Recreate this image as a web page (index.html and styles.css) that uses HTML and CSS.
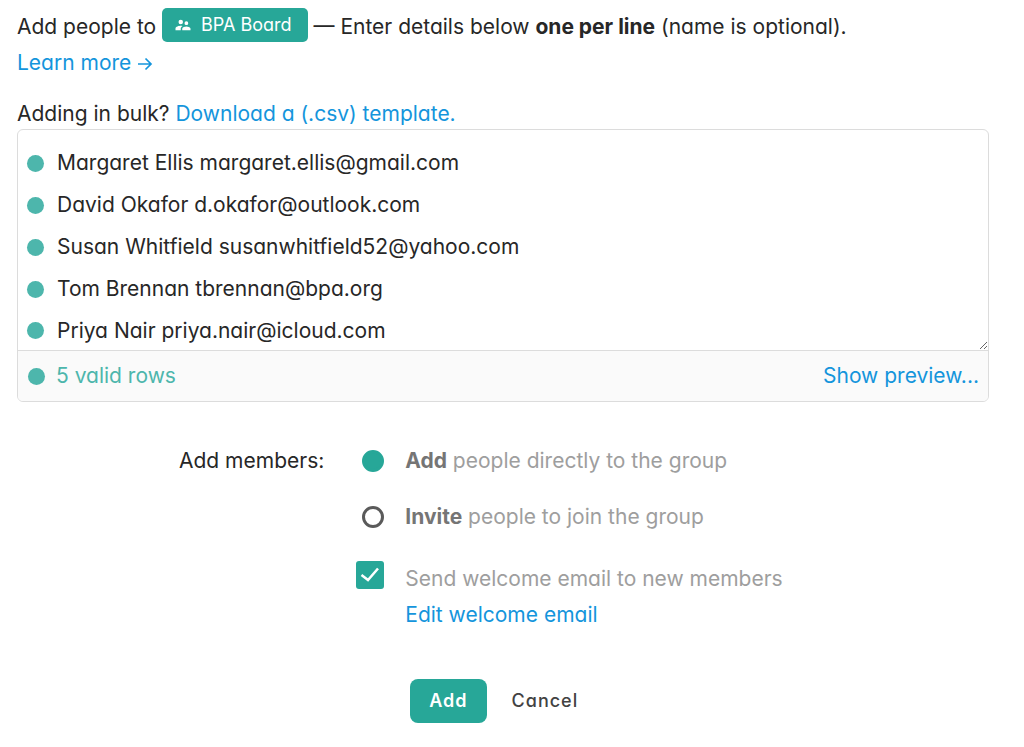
FILE: index.html
```html
<!DOCTYPE html>
<html lang="en">
<head>
<meta charset="utf-8">
<meta name="viewport" content="width=device-width, initial-scale=1">
<title>Add people</title>
<link rel="stylesheet" href="styles.css">
</head>
<body>
<form class="page">
  <p class="intro">
    Add people to
    <a class="group" href="#group"><svg class="group-icon" viewBox="0 0 24 24" aria-hidden="true"><path d="M16.500 12a2.500 2.500 0 1 0 0-5 2.500 2.500 0 0 0 0 5zM9 11a3 3 0 1 0 0-6 3 3 0 0 0 0 6zm7.500 3c-1.830 0-5.500.92-5.500 2.750V19h11v-2.250c0-1.830-3.670-2.750-5.500-2.750zM9 13c-2.330 0-7 1.170-7 3.500V19h7v-2.250c0-.85.330-2.340 2.370-3.470C10.500 13.100 9.660 13 9 13z"/></svg>BPA Board</a>
    — Enter details below <strong>one per line</strong> (name is optional).<br>
    <a class="link" href="#learn">Learn more <svg class="arrow" viewBox="0 0 16 16" aria-hidden="true"><path d="M1 8h13M8.500 2.500L14 8l-5.500 5.500"/></svg></a>
  </p>
  <label class="bulk" for="people">Adding in bulk? <a class="link" href="#template">Download a (.csv) template.</a></label>

  <div class="editor">
    <div class="editor-body">
      <ul class="markers" aria-hidden="true">
        <li class="marker"></li>
        <li class="marker"></li>
        <li class="marker"></li>
        <li class="marker"></li>
        <li class="marker"></li>
      </ul>
      <textarea class="people" id="people" rows="5" spellcheck="false">Margaret Ellis margaret.ellis@gmail.com
David Okafor d.okafor@outlook.com
Susan Whitfield susanwhitfield52@yahoo.com
Tom Brennan tbrennan@bpa.org
Priya Nair priya.nair@icloud.com</textarea>
    </div>
    <div class="editor-footer">
      <span class="valid"><span class="dot"></span>5 valid rows</span>
      <a class="link" href="#preview">Show preview...</a>
    </div>
  </div>

  <div class="options">
    <div class="options-label" id="members">Add members:</div>
    <div class="choices" role="group" aria-labelledby="members">
      <div class="choice">
        <input class="radio" type="radio" name="mode" id="add" checked>
        <label for="add"><strong>Add</strong> people directly to the group</label>
      </div>
      <div class="choice">
        <input class="radio" type="radio" name="mode" id="invite">
        <label for="invite"><strong>Invite</strong> people to join the group</label>
      </div>
      <div class="choice welcome">
        <span class="check">
          <input class="checkbox" type="checkbox" id="welcome" checked>
          <svg class="tick" viewBox="0 0 28 28" aria-hidden="true"><path d="M5.500 14L12 19 22 7.500"/></svg>
        </span>
        <div class="welcome-text">
          <label for="welcome">Send welcome email to new members</label>
          <a class="link" href="#edit">Edit welcome email</a>
        </div>
      </div>
      <div class="actions">
        <button class="button primary" type="submit">Add</button>
        <button class="button" type="button">Cancel</button>
      </div>
    </div>
  </div>
</form>
</body>
</html>
```
FILE: styles.css
```css
* { box-sizing: border-box; }

body {
  margin: 0;
  background: #fff;
  color: #272727;
  font: 400 21px/36px Inter, "Liberation Sans", sans-serif;
  font-feature-settings: "cv11";
}

strong { font-weight: 700; }

.page { padding: 8px 35px 24px 17px; }

.intro { margin: 0 0 16px; }

.group {
  display: inline-flex;
  align-items: center;
  height: 34px;
  padding: 0 16px 0 12px;
  border-radius: 5px;
  background: #27a798;
  color: #fff;
  font-size: 18px;
  line-height: 34px;
  text-decoration: none;
  vertical-align: baseline;
}

.group-icon {
  width: 18px;
  height: 18px;
  margin-right: 9px;
  fill: currentColor;
}

.link { color: #1495dc; text-decoration: none; }

.arrow {
  width: 16px;
  height: 16px;
  vertical-align: -2px;
  fill: none;
  stroke: currentColor;
  stroke-width: 1.7;
}

.bulk { display: block; line-height: 34px; }

.editor {
  margin-top: -2px;
  border: 1px solid #dcdcdc;
  border-radius: 6px;
  overflow: hidden;
}

.editor-body { display: flex; }

.markers {
  flex: none;
  width: 39px;
  margin: 0;
  padding: 12px 9px 0;
  list-style: none;
}

.marker {
  display: flex;
  align-items: center;
  height: 42px;
}

.marker:last-child { height: 40px; }

.marker::before,
.dot {
  content: "";
  width: 17px;
  height: 17px;
  border-radius: 50%;
  background: #4db6ac;
}

.people {
  flex: 1;
  min-width: 0;
  height: 220px;
  margin: 0;
  padding: 12px 8px 0 0;
  border: 0;
  outline: 0;
  background: transparent;
  color: inherit;
  font: inherit;
  font-feature-settings: inherit;
  line-height: 42px;
  resize: vertical;
  overflow: hidden;
}

.editor-footer {
  display: flex;
  align-items: center;
  justify-content: space-between;
  height: 51px;
  padding: 0 9px 0 10px;
  border-top: 1px solid #dcdcdc;
  background: #fafafa;
}

.valid {
  display: flex;
  align-items: center;
  gap: 11px;
  color: #4db6ac;
}

.options {
  display: grid;
  grid-template-columns: 9fr 19fr;
  column-gap: 16px;
  margin-top: 41px;
}

.options-label { text-align: right; }

.choices { color: #9e9e9e; }

.choice {
  display: flex;
  align-items: center;
  gap: 21px;
  margin-bottom: 20px;
  padding-left: 22px;
}

.choice strong { color: #757575; }

.radio {
  appearance: none;
  width: 22px;
  height: 22px;
  margin: 0;
  border: 3px solid #5a5a5a;
  border-radius: 50%;
}

.radio:checked { border-color: #27a798; background: #27a798; }

.welcome {
  align-items: flex-start;
  margin: 26px 0 46px;
  padding-left: 16px;
}

.check { display: grid; }

.check > * { grid-area: 1 / 1; }

.checkbox {
  appearance: none;
  width: 28px;
  height: 28px;
  margin: 0;
  border-radius: 3px;
  background: #27a798;
}

.tick {
  width: 28px;
  height: 28px;
  pointer-events: none;
  fill: none;
  stroke: #fff;
  stroke-width: 2.5;
}

.welcome-text {
  display: flex;
  flex-direction: column;
  align-items: flex-start;
}

.actions {
  display: flex;
  gap: 6px;
  padding-left: 70px;
}

.button {
  height: 44px;
  padding: 0 19px;
  border: 0;
  border-radius: 8px;
  background: transparent;
  color: #424242;
  font: 500 18px/44px Inter, "Liberation Sans", sans-serif;
  font-feature-settings: "cv11";
  letter-spacing: 1px;
}

.primary {
  background: #27a798;
  color: #fff;
  font-weight: 600;
}
```
